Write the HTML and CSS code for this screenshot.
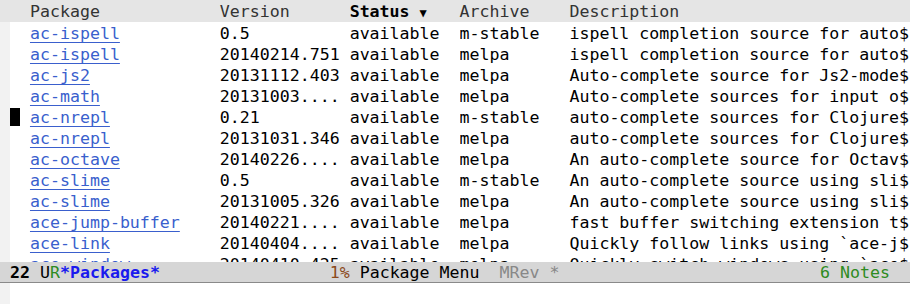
FILE: index.html
```html
<!DOCTYPE html>
<html lang="en">
<head>
    <meta charset="UTF-8">
    <title>*Packages*</title>
    <link rel="stylesheet" href="styles.css">
</head>
<body>
    <div class="frame">
        <div class="header-line">
            <span class="mark"></span>
            <span>Package</span>
            <span>Version</span>
            <span class="sorted">Status <span class="arrow">▼</span></span>
            <span>Archive</span>
            <span>Description</span>
        </div>

        <div class="buffer">
            <div class="row"><span class="mark"></span><a href="#">ac-ispell</a><span>0.5</span><span>available</span><span>m-stable</span><span>ispell completion source for auto$</span></div>
            <div class="row"><span class="mark"></span><a href="#">ac-ispell</a><span>20140214.751</span><span>available</span><span>melpa</span><span>ispell completion source for auto$</span></div>
            <div class="row"><span class="mark"></span><a href="#">ac-js2</a><span>20131112.403</span><span>available</span><span>melpa</span><span>Auto-complete source for Js2-mode$</span></div>
            <div class="row"><span class="mark"></span><a href="#">ac-math</a><span>20131003....</span><span>available</span><span>melpa</span><span>Auto-complete sources for input o$</span></div>
            <div class="row"><span class="mark"><span class="cursor"></span></span><a href="#">ac-nrepl</a><span>0.21</span><span>available</span><span>m-stable</span><span>auto-complete sources for Clojure$</span></div>
            <div class="row"><span class="mark"></span><a href="#">ac-nrepl</a><span>20131031.346</span><span>available</span><span>melpa</span><span>auto-complete sources for Clojure$</span></div>
            <div class="row"><span class="mark"></span><a href="#">ac-octave</a><span>20140226....</span><span>available</span><span>melpa</span><span>An auto-complete source for Octav$</span></div>
            <div class="row"><span class="mark"></span><a href="#">ac-slime</a><span>0.5</span><span>available</span><span>m-stable</span><span>An auto-complete source using sli$</span></div>
            <div class="row"><span class="mark"></span><a href="#">ac-slime</a><span>20131005.326</span><span>available</span><span>melpa</span><span>An auto-complete source using sli$</span></div>
            <div class="row"><span class="mark"></span><a href="#">ace-jump-buffer</a><span>20140221....</span><span>available</span><span>melpa</span><span>fast buffer switching extension t$</span></div>
            <div class="row"><span class="mark"></span><a href="#">ace-link</a><span>20140404....</span><span>available</span><span>melpa</span><span>Quickly follow links using `ace-j$</span></div>
            <div class="row"><span class="mark"></span><a href="#">ace-window</a><span>20140410.425</span><span>available</span><span>melpa</span><span>Quickly switch windows using `ace$</span></div>
        </div>

        <div class="mode-line">
            <div class="ml-left">
                <span class="lines">22</span>
                <span>U<span class="green">R</span><span class="bufname">*Packages*</span></span>
            </div>
            <div class="ml-mid">
                <span class="brown">1%</span>
                <span>Package Menu</span>
                <span class="dim">MRev *</span>
            </div>
            <div class="ml-right green">6 Notes</div>
        </div>

        <div class="echo-area"></div>
    </div>
</body>
</html>
```

FILE: styles.css
```css
body { margin: 0; background: #fff; }
.frame { width: 910px; height: 304px; overflow: hidden; font-family: "DejaVu Sans Mono", monospace; font-size: 16.6px; line-height: 21px; color: #000; display: grid; grid-template-rows: 22px 240px 21px 21px; }

.header-line, .row { display: grid; grid-template-columns: 2ch 19ch 13ch 11ch 11ch 1fr; white-space: pre; }
.header-line { background: #e5e5e5; color: #333; padding-left: 10px; line-height: 22px; padding-top: 1px; }
.sorted { color: #000; font-weight: bold; }
.arrow { font-size: 12px; font-weight: normal; }

.buffer { overflow: hidden; background: #fff; border-left: 10px solid #f2f2f2; }
.row { height: 21px; box-sizing: border-box; padding-top: 2px; line-height: 19px; }
.row a { color: #3a5fcd; text-decoration: underline; text-underline-offset: 3px; }
.row span { overflow: hidden; }
.mark { position: relative; }
.cursor { position: absolute; left: 0; top: -3px; width: 10px; height: 21px; background: #000; }

.mode-line { display: flex; background: #d6d6d6; border-bottom: 1px solid #8a8a8a; padding-left: 10px; white-space: pre; line-height: 21px; }
.ml-left { width: 32ch; display: flex; gap: 1ch; }
.lines { font-weight: bold; }
.bufname { color: #1a1aee; font-weight: bold; }
.ml-mid { display: flex; gap: 1ch; }
.ml-right { margin-left: auto; margin-right: 20px; }
.green { color: #2e8b22; }
.brown { color: #8b4a1c; }
.dim { color: #888; margin-left: 1ch; }

.echo-area { background: #fff; border-left: 10px solid #f2f2f2; }
```
